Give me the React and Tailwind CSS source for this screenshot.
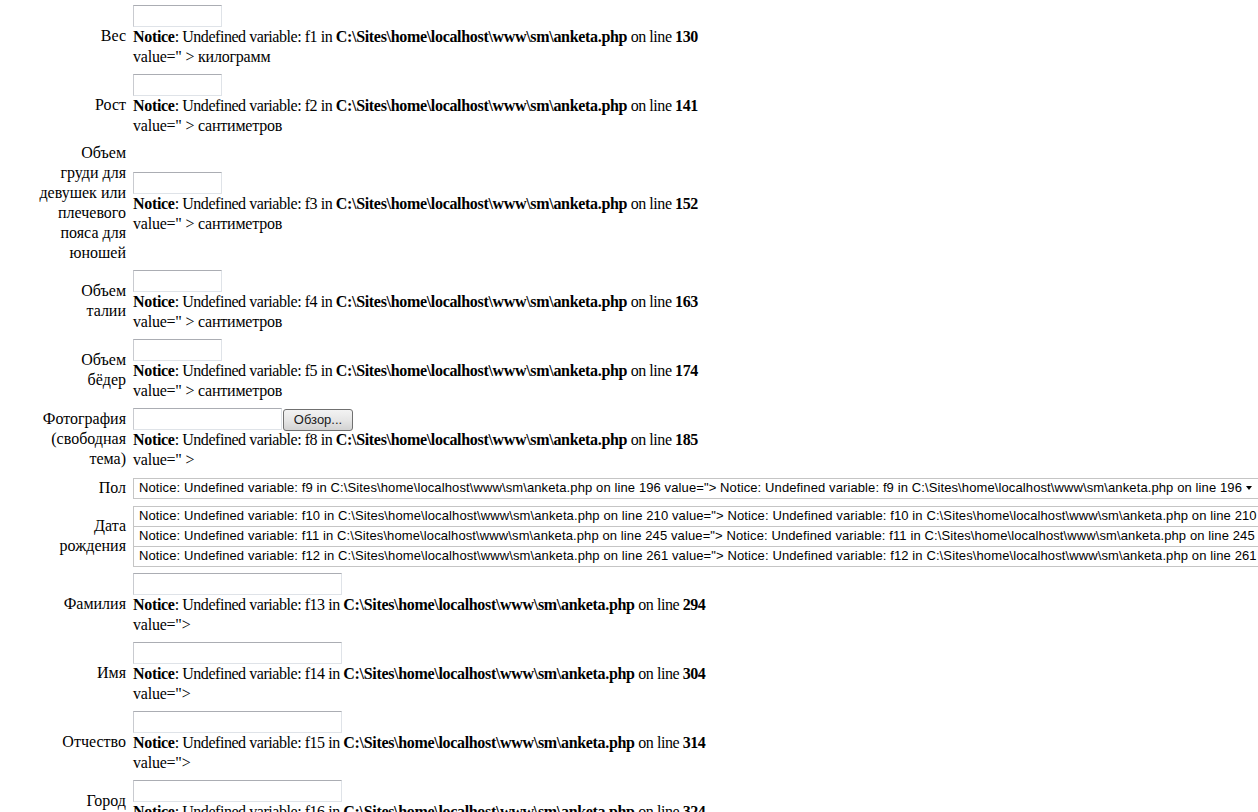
const PATH = "C:\\Sites\\home\\localhost\\www\\sm\\anketa.php";
const sans = "font-['Liberation_Sans',Arial,sans-serif]";

function Row({ label, children }) {
  return (
    <div className="flex items-center">
      <div className="w-[126px] shrink-0 text-right whitespace-nowrap">
        {label.map((l, i) => (
          <div key={i}>{l}</div>
        ))}
      </div>
      <div className="ml-[7px] shrink-0">{children}</div>
    </div>
  );
}

function TextBox({ className }) {
  return (
    <div
      className={
        "h-[22px] border border-[#dfe3e8] border-t-[#abadb3] border-l-[#c9cbd0] bg-white " +
        className
      }
    />
  );
}

function Notice({ v, line }) {
  return (
    <div className="whitespace-nowrap tracking-[-0.45px]">
      <b className="tracking-[-0.32px]">Notice</b>: Undefined variable: {v} in{" "}
      <b className="tracking-[-0.32px]">{PATH}</b> on line <b>{line}</b>
    </div>
  );
}

function Value({ text }) {
  return <div className="whitespace-nowrap tracking-[-0.22px]">{text}</div>;
}

function Select({ v, line, className }) {
  const text = `Notice: Undefined variable: ${v} in ${PATH} on line ${line} value="> Notice: Undefined variable: ${v} in ${PATH} on line ${line}`;
  return (
    <div
      className={
        "relative shrink-0 overflow-hidden whitespace-nowrap border-x border-b border-[#c5c5c5] bg-white pl-[5px] text-[13px] leading-[18px] tracking-[0.11px] " +
        sans +
        " " +
        className
      }
    >
      {text}
      <span className="absolute right-[9px] top-[7px] h-0 w-0 border-x-[3px] border-t-[4px] border-x-transparent border-t-black" />
    </div>
  );
}

export default function App() {
  return (
    <div className="h-screen w-screen overflow-hidden bg-white text-black font-['Liberation_Serif','Times_New_Roman',serif] text-[16px] leading-[20px]">
      <div className="flex flex-col gap-[7px] pt-[5px]">
        <Row label={["Вес"]}>
          <TextBox className="w-[89px]" />
          <Notice v="f1" line="130" />
          <Value text={'value=" > килограмм'} />
        </Row>

        <Row label={["Рост"]}>
          <TextBox className="w-[89px]" />
          <Notice v="f2" line="141" />
          <Value text={'value=" > сантиметров'} />
        </Row>

        <Row label={["Объем", "груди для", "девушек или", "плечевого", "пояса для", "юношей"]}>
          <TextBox className="w-[89px]" />
          <Notice v="f3" line="152" />
          <Value text={'value=" > сантиметров'} />
        </Row>

        <Row label={["Объем", "талии"]}>
          <TextBox className="w-[89px]" />
          <Notice v="f4" line="163" />
          <Value text={'value=" > сантиметров'} />
        </Row>

        <Row label={["Объем", "бёдер"]}>
          <TextBox className="w-[89px]" />
          <Notice v="f5" line="174" />
          <Value text={'value=" > сантиметров'} />
        </Row>

        <Row label={["Фотография", "(свободная", "тема)"]}>
          <div className="flex h-[22px] items-start">
            <TextBox className="w-[149px]" />
            <div
              className={
                "ml-[1px] mt-[1px] flex h-[22px] w-[70px] items-center justify-center rounded-[3px] border border-[#707070] bg-linear-to-b from-[#f3f3f3] via-[#e6e6e6] to-[#d2d2d2] text-[13px] text-[#1a1a1a] " +
                sans
              }
            >
              Обзор...
            </div>
          </div>
          <Notice v="f8" line="185" />
          <Value text={'value=" >'} />
        </Row>

        <Row label={["Пол"]}>
          <div className="h-[22px] pt-[1px]">
            <Select v="f9" line="196" className="h-[21px] w-[1129px] border-t" />
          </div>
        </Row>

        <Row label={["Дата", "рождения"]}>
          <div className="flex h-[60px] flex-col">
            <Select v="f10" line="210" className="h-[21px] w-[1150px] border-t" />
            <Select v="f11" line="245" className="h-[20px] w-[1150px]" />
            <Select v="f12" line="261" className="h-[20px] w-[1150px]" />
          </div>
        </Row>

        <Row label={["Фамилия"]}>
          <TextBox className="w-[209px]" />
          <Notice v="f13" line="294" />
          <Value text={'value=">'} />
        </Row>

        <Row label={["Имя"]}>
          <TextBox className="w-[209px]" />
          <Notice v="f14" line="304" />
          <Value text={'value=">'} />
        </Row>

        <Row label={["Отчество"]}>
          <TextBox className="w-[209px]" />
          <Notice v="f15" line="314" />
          <Value text={'value=">'} />
        </Row>

        <Row label={["Город", "проживания"]}>
          <TextBox className="w-[209px]" />
          <Notice v="f16" line="324" />
          <Value text={'value=">'} />
        </Row>
      </div>
    </div>
  );
}
